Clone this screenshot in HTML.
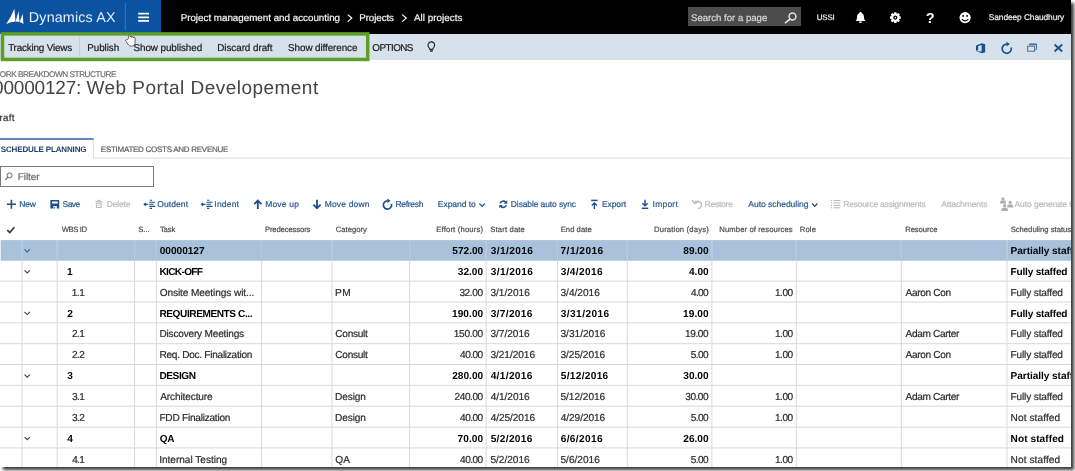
<!DOCTYPE html>
<html lang="en">
<head>
<meta charset="utf-8">
<title>Work breakdown structure - 00000127: Web Portal Developement</title>
<style>
html,body{margin:0;padding:0;background:#fff;}
body{width:1075px;height:471px;overflow:hidden;position:relative;font-family:"Liberation Sans",Arial,sans-serif;text-rendering:geometricPrecision;}
#app{position:absolute;left:0;top:0;width:1071px;height:467px;overflow:hidden;background:#fff;}
#topbar{position:absolute;left:0;top:0;width:1071px;height:33.5px;background:#000;}
#brand{position:absolute;left:0;top:0;width:160.6px;height:33.5px;background:#0b53a0;}
#search{position:absolute;left:687.8px;top:6.8px;width:113.2px;height:19.7px;background:#4c4c4c;}
#actionbar{position:absolute;left:0;top:33.5px;width:1071px;height:26.5px;background:#d7e1ec;}
#filter{position:absolute;left:0;top:166.4px;width:152.4px;height:18.6px;border:1px solid #7a7a7a;background:#fff;}
#texts{position:absolute;left:0;top:0;width:1071px;height:467px;will-change:transform;}
.t{position:absolute;height:24px;line-height:24px;white-space:pre;-webkit-text-stroke:0.2px;}
.b{font-weight:700;-webkit-text-stroke:0;}
.l{-webkit-text-stroke:0;}
svg{position:absolute;left:0;top:0;overflow:visible;}
#shadow{position:absolute;left:0;top:0;width:1071px;height:467px;background:#fff;box-shadow:3px 3px 3px 0 rgba(0,0,0,.77);}
</style>
</head>
<body>
<div id="shadow"></div>
<div id="app">
<div id="topbar"><div id="brand"></div><div id="search"></div></div>
<div id="actionbar"></div>
<div id="filter"></div>
<svg id="gfx" width="1071" height="467" viewBox="0 0 1071 467">
<path d="M0 139.1H93.6" stroke="#2f629e" stroke-width="1.5" fill="none"/>
<path d="M93.4 140V158.2H1071" stroke="#dcdcdc" stroke-width="1" fill="none"/>
<rect x="0.7" y="240.1" width="1071" height="20.6" fill="#a9c1da"/>
<path d="M22 240.2V467" stroke="#d9d9d9" stroke-width="1"/>
<path d="M22 240.2V260.4" stroke="#b3c8de" stroke-width="1.1"/>
<path d="M57.2 240.2V467" stroke="#d9d9d9" stroke-width="1"/>
<path d="M57.2 240.2V260.4" stroke="#b3c8de" stroke-width="1.1"/>
<path d="M134.6 240.2V467" stroke="#d9d9d9" stroke-width="1"/>
<path d="M134.6 240.2V260.4" stroke="#b3c8de" stroke-width="1.1"/>
<path d="M156.4 240.2V467" stroke="#d9d9d9" stroke-width="1"/>
<path d="M156.4 240.2V260.4" stroke="#b3c8de" stroke-width="1.1"/>
<path d="M261.4 240.2V467" stroke="#d9d9d9" stroke-width="1"/>
<path d="M261.4 240.2V260.4" stroke="#b3c8de" stroke-width="1.1"/>
<path d="M331.9 240.2V467" stroke="#d9d9d9" stroke-width="1"/>
<path d="M331.9 240.2V260.4" stroke="#b3c8de" stroke-width="1.1"/>
<path d="M409.6 240.2V467" stroke="#d9d9d9" stroke-width="1"/>
<path d="M409.6 240.2V260.4" stroke="#b3c8de" stroke-width="1.1"/>
<path d="M486.2 240.2V467" stroke="#d9d9d9" stroke-width="1"/>
<path d="M486.2 240.2V260.4" stroke="#b3c8de" stroke-width="1.1"/>
<path d="M557.5 240.2V467" stroke="#d9d9d9" stroke-width="1"/>
<path d="M557.5 240.2V260.4" stroke="#b3c8de" stroke-width="1.1"/>
<path d="M627.3 240.2V467" stroke="#d9d9d9" stroke-width="1"/>
<path d="M627.3 240.2V260.4" stroke="#b3c8de" stroke-width="1.1"/>
<path d="M711.9 240.2V467" stroke="#d9d9d9" stroke-width="1"/>
<path d="M711.9 240.2V260.4" stroke="#b3c8de" stroke-width="1.1"/>
<path d="M796.3 240.2V467" stroke="#d9d9d9" stroke-width="1"/>
<path d="M796.3 240.2V260.4" stroke="#b3c8de" stroke-width="1.1"/>
<path d="M901.3 240.2V467" stroke="#d9d9d9" stroke-width="1"/>
<path d="M901.3 240.2V260.4" stroke="#b3c8de" stroke-width="1.1"/>
<path d="M1007 240.2V467" stroke="#d9d9d9" stroke-width="1"/>
<path d="M1007 240.2V260.4" stroke="#b3c8de" stroke-width="1.1"/>
<path d="M0 281.1H1071" stroke="#d9d9d9" stroke-width="1"/>
<path d="M0 302H1071" stroke="#d9d9d9" stroke-width="1"/>
<path d="M0 322.8H1071" stroke="#d9d9d9" stroke-width="1"/>
<path d="M0 343.7H1071" stroke="#d9d9d9" stroke-width="1"/>
<path d="M0 364.5H1071" stroke="#d9d9d9" stroke-width="1"/>
<path d="M0 385.4H1071" stroke="#d9d9d9" stroke-width="1"/>
<path d="M0 406.2H1071" stroke="#d9d9d9" stroke-width="1"/>
<path d="M0 427.1H1071" stroke="#d9d9d9" stroke-width="1"/>
<path d="M0 447.9H1071" stroke="#d9d9d9" stroke-width="1"/>
<g transform="translate(125.2 32.5)"><path d="M3.2 6.2V1.4c0-1.2 1.7-1.2 1.7 0V4.6c0-1 1.7-1 1.7 0V4.9c0-1 1.7-1 1.7 0V5.4c0-.9 1.6-.9 1.6 0V9.800c0 2.200-1.400 3.800-3.300 3.800H5.800c-1.400 0-2.200-.7-3-1.900L.6 8.400c-.6-.9.600-1.800 1.400-.9z" fill="#fff" stroke="#3a3a3a" stroke-width="0.75"/></g>
<rect x="2.5" y="33.9" width="365.2" height="25.55" fill="none" stroke="#5c9e27" stroke-width="3.5"/>
<path d="M79.5 36.5V56.5" stroke="#c2cedc" stroke-width="1"/>
<g fill="#fff"><path d="M6.2 23.9Q11 17.200 14.4 8.7L15.5 21.5Q10.5 21.7 6.2 23.9Z"/><path d="M15.55 21.5L18.600 11.2L19.55 22Q17.5 21.600 15.55 21.5Z"/><path d="M19.6 22.05L22.700 13.700L23.4 24.1Q21.5 22.7 19.6 22.05Z"/></g>
<path d="M125.3 3V30" stroke="#3f78bb" stroke-width="1"/>
<path d="M138.2 13.7H149M138.2 17.3H149M138.2 20.9H149" stroke="#fff" stroke-width="1.7"/>
<path d="M347.8 14.6L351.8 18.1L347.8 21.6" stroke="#fff" stroke-width="1.2" fill="none"/>
<path d="M402.2 14.6L406.2 18.1L402.2 21.6" stroke="#fff" stroke-width="1.2" fill="none"/>
<g stroke="#e0e0e0" fill="none" stroke-linecap="round"><circle cx="792.5" cy="16.5" r="3.4" stroke-width="1.5"/><path d="M790 19.1L785.6 22.6" stroke-width="1.8"/></g>
<path fill="#fff" d="M860.5 12.1c-.7 0-1.2.5-1.2 1.1c-1.6.6-2.3 2-2.3 3.7c0 2-.4 2.8-1.2 3.6v.6h9.4v-.6c-.8-.8-1.2-1.6-1.2-3.6c0-1.7-.7-3.1-2.3-3.7c0-.6-.5-1.1-1.2-1.1zM859 21.6a1.5 1.5 0 0 0 3 0z"/>
<path fill="#fff" fill-rule="evenodd" d="M900.69 16.51L900.69 18.69L899.00 19.12L898.99 19.14L899.88 20.64L898.34 22.18L896.84 21.29L896.82 21.30L896.39 22.99L894.21 22.99L893.78 21.30L893.76 21.29L892.26 22.18L890.72 20.64L891.61 19.14L891.60 19.12L889.91 18.69L889.91 16.51L891.60 16.08L891.61 16.06L890.72 14.56L892.26 13.02L893.76 13.91L893.78 13.90L894.21 12.21L896.39 12.21L896.82 13.90L896.84 13.91L898.34 13.02L899.88 14.56L898.99 16.06L899.00 16.08Z M897.4 17.6a2.1 2.1 0 1 0 -4.2 0a2.1 2.1 0 1 0 4.2 0Z"/>
<circle cx="895.3" cy="17.6" r="0.8" fill="#fff"/>
<g><circle cx="965.1" cy="17.6" r="5.6" fill="#fff"/><circle cx="963.1" cy="15.9" r="0.95" fill="#000"/><circle cx="967.1" cy="15.9" r="0.95" fill="#000"/><path d="M961.9 19.2Q965.1 22.6 968.3 19.2" stroke="#000" stroke-width="1.1" fill="none"/></g>
<g stroke="#222" fill="none"><path d="M429.9 49.4C429.6 47.8 428 47.3 428 45.2a3.3 3.3 0 0 1 6.6 0c0 2.1-1.6 2.6-1.9 4.2Z" stroke-width="1.1"/><path d="M429.9 51H432.8" stroke-width="1.4"/></g>
<path fill="#1c4f8c" fill-rule="evenodd" d="M976 45.6L981.8 43.3L985.2 44.3V52.2L981.8 53.2L976 51V50.9L981.6 51.6V45.1L978.2 45.9V50L976 50.9Z"/>
<path d="M1011.2 47.5A4.6 4.6 0 1 1 1006.7 44.1" stroke="#1c4f8c" fill="none" stroke-width="1.7"/><path fill="#1c4f8c" d="M1006.5 41.8L1009.9 44.1L1006.5 46.4Z"/>
<g stroke="#4b6f9c" fill="none"><path d="M1029.6 45.4V44.2H1036.5V49.4H1035.2" stroke-width="1"/><path d="M1029.4 44.4H1036.6" stroke-width="1.6"/><rect x="1027.6" y="46.2" width="7" height="5" stroke-width="1" fill="#d7e1ec"/></g>
<path d="M1054.6 44.5L1062.2 51.5M1062.2 44.5L1054.6 51.5" stroke="#1c4f8c" stroke-width="1.8"/>
<g stroke="#666" fill="none"><circle cx="9.6" cy="175.4" r="2.5" stroke-width="1"/><path d="M7.8 177.3L5.3 179.8" stroke-width="1.2"/></g>
<path d="M6.8 204.3H16M11.4 199.8V208.8" stroke="#1c4f8c" stroke-width="1.6"/>
<path fill="#1c4f8c" fill-rule="evenodd" d="M50.4 200H59.2V208.6H50.4Z M52 201.6V203.6H57.7V201.6Z M53.4 205.9V208.6H56.8V205.9Z"/><rect x="53.9" y="207.1" width="0.9" height="1.5" fill="#1c4f8c"/>
<g stroke="#b8b8b8" fill="none" stroke-width="1"><path d="M95.3 201.7H102.3M97.6 201.5V200.3H100V201.5"/><rect x="96.4" y="203.2" width="4.8" height="4.3"/><path d="M97.4 205.3H100.2" stroke-width="0.8"/></g>
<path fill="#1c4f8c" d="M143.4 204.3L145.20000000000002 202.4L147.0 204.3L145.20000000000002 206.20000000000002Z"/>
<g stroke="#1c4f8c" fill="none"><path d="M146.6 204.3H148.3" stroke-width="1.1"/><path d="M149.8 200.2H152.0M149.20000000000002 202.2H155.20000000000002M149.20000000000002 204.3H153.6M149.20000000000002 206.4H155.20000000000002M149.8 208.4H152.0" stroke-width="1.1"/></g>
<path fill="#1c4f8c" d="M200.7 204.3L202.5 202.4L204.29999999999998 204.3L202.5 206.20000000000002Z"/>
<g stroke="#1c4f8c" fill="none"><path d="M203.89999999999998 204.3H205.6" stroke-width="1.1"/><path d="M207.1 200.2H209.29999999999998M206.5 202.2H212.5M206.5 204.3H210.89999999999998M206.5 206.4H212.5M207.1 208.4H209.29999999999998" stroke-width="1.1"/></g>
<path d="M257.8 209V200.8M254.2 204.1L257.8 200.5L261.4 204.100" stroke="#1c4f8c" stroke-width="1.85" fill="none"/>
<path d="M317 199.800V208M313.4 204.7L317 208.3L320.6 204.7" stroke="#1c4f8c" stroke-width="1.85" fill="none"/>
<path d="M391.4 203.9A4.100 4.100 0 1 1 387.4 200.900" stroke="#1c4f8c" fill="none" stroke-width="1.7"/><path fill="#1c4f8c" d="M387.3 198.500L390.5 200.800L387.3 203.100Z"/>
<path d="M479.40 203.45L482.10 206.35L484.80 203.45" stroke="#1c4f8c" stroke-width="1.25" fill="none"/>
<path d="M812.00 203.45L814.70 206.35L817.40 203.45" stroke="#1c4f8c" stroke-width="1.25" fill="none"/>
<g stroke="#1c4f8c" fill="none" stroke-width="1.6"><path d="M500.3 203.5A3.1 3.1 0 0 1 505.6 202.2"/><path d="M506.3 205.1A3.1 3.1 0 0 1 501 206.4"/></g><path fill="#1c4f8c" d="M507.3 200.3V203.7H503.9Z M499.3 208.3V204.9H502.7Z"/>
<path d="M591.2 200.4H597.6" stroke="#1c4f8c" stroke-width="1.5" fill="none"/><path d="M594.4 209V203M591.8 205.5L594.4 202.9L597 205.500" stroke="#1c4f8c" stroke-width="1.4" fill="none"/>
<path d="M641.8 208.3H648.2" stroke="#1c4f8c" stroke-width="1.5" fill="none"/><path d="M645 199.700V205.700M642.4 203.2L645 205.800L647.6 203.2" stroke="#1c4f8c" stroke-width="1.4" fill="none"/>
<g stroke="#b8b8b8" fill="none" stroke-width="1.2"><path d="M694.6 203.2A3.600 3.600 0 1 1 698 208.400"/><path d="M692.2 200.300L694.4 203.600L697.8 201.900"/></g>
<g stroke="#b8b8b8" fill="none" stroke-width="1"><path d="M833.4 200.6H840.4M833.4 203H840.4M833.4 205.4H840.4M833.4 207.8H840.4"/><path d="M830.8 200.6H832M830.8 203H832M830.8 205.4H832M830.8 207.8H832"/></g>
<g fill="#adadad"><circle cx="1003" cy="198.800" r="1.6"/><path d="M1000 203.5v-.9a3 2.300 0 0 1 6 0v.9z"/><circle cx="1010.2" cy="202.300" r="1.6"/><path d="M1007.2 207.600v-1a3 2.300 0 0 1 6 0v1z"/><circle cx="1004.600" cy="205.700" r="1.6"/><path d="M1001.400 211v-1.200a3.200 2.400 0 0 1 6.400 0v1.200z"/></g>
<path d="M7.3 230.2L9.8 232.6L14.3 227.2" stroke="#333" stroke-width="1.6" fill="none"/>
<path d="M24.50 249.43L27.20 252.03L29.90 249.43" stroke="#2a5a94" stroke-width="1.1" fill="none"/>
<path d="M24.50 270.28L27.20 272.88L29.90 270.28" stroke="#444" stroke-width="1.1" fill="none"/>
<path d="M24.50 311.98L27.20 314.58L29.90 311.98" stroke="#444" stroke-width="1.1" fill="none"/>
<path d="M24.50 374.53L27.20 377.13L29.90 374.53" stroke="#444" stroke-width="1.1" fill="none"/>
<path d="M24.50 437.07L27.20 439.68L29.90 437.07" stroke="#444" stroke-width="1.1" fill="none"/>
</svg>
<div id="texts">
<div class="header">
<span class="t l" style="left:28.85px;top:6px;font-size:14.3px;color:#e4edf8;letter-spacing:0.160px">Dynamics AX</span>
<span class="t" style="left:180.65px;top:7px;font-size:9.8px;color:#f4f4f4;letter-spacing:-0.005px">Project management and accounting</span>
<span class="t" style="left:359.25px;top:7px;font-size:9.8px;color:#f4f4f4;letter-spacing:-0.093px">Projects</span>
<span class="t" style="left:413.90px;top:7px;font-size:9.8px;color:#f4f4f4;letter-spacing:0.055px">All projects</span>
<span class="t" style="left:691.00px;top:7px;font-size:9.6px;color:#d8d8d8;letter-spacing:0.000px">Search for a page</span>
<span class="t" style="left:816.80px;top:6px;font-size:7.9px;color:#f0f0f0;letter-spacing:-0.183px">USSI</span>
<span class="t b" style="left:925.85px;top:7px;font-size:14.5px;color:#fff;letter-spacing:0.000px">?</span>
<span class="t" style="left:988.80px;top:5px;font-size:8.3px;color:#f0f0f0;letter-spacing:-0.050px">Sandeep Chaudhury</span>
</div>
<div class="actionbar">
<span class="t" style="left:8.15px;top:37px;font-size:9.9px;color:#1a1a1a;letter-spacing:-0.188px">Tracking Views</span>
<span class="t" style="left:87.25px;top:37px;font-size:9.9px;color:#1a1a1a;letter-spacing:-0.067px">Publish</span>
<span class="t" style="left:133.50px;top:37px;font-size:9.9px;color:#1a1a1a;letter-spacing:-0.081px">Show published</span>
<span class="t" style="left:217.25px;top:37px;font-size:9.9px;color:#1a1a1a;letter-spacing:-0.062px">Discard draft</span>
<span class="t" style="left:288.10px;top:37px;font-size:9.9px;color:#1a1a1a;letter-spacing:-0.096px">Show difference</span>
<span class="t" style="left:372.30px;top:37px;font-size:9.9px;color:#1a1a1a;letter-spacing:-0.550px">OPTIONS</span>
</div>
<div class="pagetitle">
<span class="t" style="left:-7.50px;top:63px;font-size:8.2px;color:#707070;letter-spacing:-0.443px">WORK BREAKDOWN STRUCTURE</span>
<span class="t l" style="left:-6.95px;top:77px;font-size:19.0px;color:#444;letter-spacing:-0.188px">00000127:</span>
<span class="t l" style="left:86.50px;top:77px;font-size:19.0px;color:#444;letter-spacing:0.466px">Web Portal Developement</span>
<span class="t" style="left:-7.75px;top:107px;font-size:9.8px;color:#333;letter-spacing:0.250px">Draft</span>
</div>
<div class="tabs">
<span class="t b" style="left:0.75px;top:138px;font-size:8.0px;color:#1f3f6e;letter-spacing:-0.141px">SCHEDULE PLANNING</span>
<span class="t" style="left:100.85px;top:138px;font-size:8.0px;color:#606060;letter-spacing:-0.273px">ESTIMATED COSTS AND REVENUE</span>
<span class="t" style="left:17.85px;top:166px;font-size:9.8px;color:#666;letter-spacing:-0.020px">Filter</span>
</div>
<div class="toolbar">
<span class="t" style="left:19.25px;top:192px;font-size:8.5px;color:#27578f;letter-spacing:-0.125px">New</span>
<span class="t" style="left:62.60px;top:192px;font-size:8.5px;color:#27578f;letter-spacing:-0.600px">Save</span>
<span class="t" style="left:106.65px;top:192px;font-size:8.5px;color:#b9b9b9;letter-spacing:-0.140px">Delete</span>
<span class="t" style="left:157.30px;top:192px;font-size:8.5px;color:#27578f;letter-spacing:0.075px">Outdent</span>
<span class="t" style="left:214.35px;top:192px;font-size:8.5px;color:#27578f;letter-spacing:0.190px">Indent</span>
<span class="t" style="left:265.15px;top:192px;font-size:8.5px;color:#27578f;letter-spacing:0.200px">Move up</span>
<span class="t" style="left:324.65px;top:192px;font-size:8.5px;color:#27578f;letter-spacing:0.169px">Move down</span>
<span class="t" style="left:395.55px;top:192px;font-size:8.5px;color:#27578f;letter-spacing:-0.317px">Refresh</span>
<span class="t" style="left:437.85px;top:192px;font-size:8.5px;color:#27578f;letter-spacing:-0.056px">Expand to</span>
<span class="t" style="left:510.85px;top:192px;font-size:8.5px;color:#27578f;letter-spacing:-0.119px">Disable auto sync</span>
<span class="t" style="left:602.05px;top:192px;font-size:8.5px;color:#27578f;letter-spacing:-0.110px">Export</span>
<span class="t" style="left:652.55px;top:192px;font-size:8.5px;color:#27578f;letter-spacing:0.230px">Import</span>
<span class="t" style="left:704.55px;top:192px;font-size:8.5px;color:#b9b9b9;letter-spacing:-0.242px">Restore</span>
<span class="t" style="left:748.30px;top:192px;font-size:8.5px;color:#27578f;letter-spacing:-0.021px">Auto scheduling</span>
<span class="t" style="left:843.25px;top:192px;font-size:8.5px;color:#b9b9b9;letter-spacing:-0.211px">Resource assignments</span>
<span class="t" style="left:941.20px;top:192px;font-size:8.5px;color:#b9b9b9;letter-spacing:-0.100px">Attachments</span>
<span class="t" style="left:1014.50px;top:192px;font-size:8.5px;color:#b9b9b9;letter-spacing:-0.070px">Auto generate team</span>
</div>
<div class="gridheader">
<span class="t" style="left:61.70px;top:218px;font-size:7.7px;color:#4c4c4c;letter-spacing:-0.380px">WBS ID</span>
<span class="t" style="left:138.25px;top:218px;font-size:7.7px;color:#4c4c4c;letter-spacing:-0.033px">S...</span>
<span class="t" style="left:159.95px;top:218px;font-size:7.7px;color:#4c4c4c;letter-spacing:-0.167px">Task</span>
<span class="t" style="left:264.90px;top:218px;font-size:7.7px;color:#4c4c4c;letter-spacing:-0.132px">Predecessors</span>
<span class="t" style="left:335.75px;top:218px;font-size:7.7px;color:#4c4c4c;letter-spacing:0.000px">Category</span>
<span class="t" style="left:436.20px;top:218px;font-size:7.7px;color:#4c4c4c;letter-spacing:0.165px">Effort (hours)</span>
<span class="t" style="left:490.35px;top:218px;font-size:7.7px;color:#4c4c4c;letter-spacing:0.128px">Start date</span>
<span class="t" style="left:560.70px;top:218px;font-size:7.7px;color:#4c4c4c;letter-spacing:0.029px">End date</span>
<span class="t" style="left:654.00px;top:218px;font-size:7.7px;color:#4c4c4c;letter-spacing:0.154px">Duration (days)</span>
<span class="t" style="left:719.30px;top:218px;font-size:7.7px;color:#4c4c4c;letter-spacing:0.089px">Number of resources</span>
<span class="t" style="left:799.80px;top:218px;font-size:7.7px;color:#4c4c4c;letter-spacing:0.100px">Role</span>
<span class="t" style="left:905.20px;top:218px;font-size:7.7px;color:#4c4c4c;letter-spacing:-0.086px">Resource</span>
<span class="t" style="left:1010.65px;top:218px;font-size:7.7px;color:#4c4c4c;letter-spacing:-0.011px">Scheduling status</span>
</div>
<div class="row">
<span class="t b" style="left:159.70px;top:240px;font-size:10.1px;color:#000;letter-spacing:0.000px">00000127</span>
<span class="t b" style="left:452.35px;top:240px;font-size:10.1px;color:#000;letter-spacing:-0.010px">572.00</span>
<span class="t b" style="left:490.65px;top:240px;font-size:10.1px;color:#000;letter-spacing:0.436px">3/1/2016</span>
<span class="t b" style="left:560.50px;top:240px;font-size:10.1px;color:#000;letter-spacing:0.486px">7/1/2016</span>
<span class="t b" style="left:683.35px;top:240px;font-size:10.1px;color:#000;letter-spacing:-0.012px">89.00</span>
<span class="t b" style="left:1010.55px;top:240px;font-size:10.1px;color:#000;letter-spacing:-0.060px">Partially staffed</span>
</div>
<div class="row">
<span class="t b" style="left:67.10px;top:261px;font-size:10.1px;color:#000;letter-spacing:0.192px">1</span>
<span class="t b" style="left:159.45px;top:261px;font-size:10.1px;color:#000;letter-spacing:-0.664px">KICK-OFF</span>
<span class="t b" style="left:457.75px;top:261px;font-size:10.1px;color:#000;letter-spacing:0.013px">32.00</span>
<span class="t b" style="left:490.65px;top:261px;font-size:10.1px;color:#000;letter-spacing:0.436px">3/1/2016</span>
<span class="t b" style="left:560.75px;top:261px;font-size:10.1px;color:#000;letter-spacing:0.350px">3/4/2016</span>
<span class="t b" style="left:688.95px;top:261px;font-size:10.1px;color:#000;letter-spacing:0.033px">4.00</span>
<span class="t b" style="left:1010.55px;top:261px;font-size:10.1px;color:#000;letter-spacing:-0.208px">Fully staffed</span>
</div>
<div class="row">
<span class="t" style="left:71.65px;top:282px;font-size:10.1px;color:#2b2b2b;letter-spacing:-0.430px">1.1</span>
<span class="t" style="left:159.70px;top:282px;font-size:10.1px;color:#2b2b2b;letter-spacing:-0.093px">Onsite Meetings wit...</span>
<span class="t" style="left:335.05px;top:282px;font-size:10.1px;color:#2b2b2b;letter-spacing:0.350px">PM</span>
<span class="t" style="left:459.40px;top:282px;font-size:10.1px;color:#2b2b2b;letter-spacing:-0.400px">32.00</span>
<span class="t" style="left:490.40px;top:282px;font-size:10.1px;color:#2b2b2b;letter-spacing:0.014px">3/1/2016</span>
<span class="t" style="left:560.50px;top:282px;font-size:10.1px;color:#2b2b2b;letter-spacing:-0.003px">3/4/2016</span>
<span class="t" style="left:690.88px;top:282px;font-size:10.1px;color:#2b2b2b;letter-spacing:-0.610px">4.00</span>
<span class="t" style="left:774.88px;top:282px;font-size:10.1px;color:#2b2b2b;letter-spacing:-0.443px">1.00</span>
<span class="t" style="left:905.60px;top:282px;font-size:10.1px;color:#2b2b2b;letter-spacing:-0.331px">Aaron Con</span>
<span class="t" style="left:1010.55px;top:282px;font-size:10.1px;color:#2b2b2b;letter-spacing:-0.150px">Fully staffed</span>
</div>
<div class="row">
<span class="t b" style="left:67.35px;top:303px;font-size:10.1px;color:#000;letter-spacing:0.192px">2</span>
<span class="t b" style="left:159.45px;top:303px;font-size:10.1px;color:#000;letter-spacing:-0.425px">REQUIREMENTS C...</span>
<span class="t b" style="left:452.00px;top:303px;font-size:10.1px;color:#000;letter-spacing:0.060px">190.00</span>
<span class="t b" style="left:490.65px;top:303px;font-size:10.1px;color:#000;letter-spacing:0.350px">3/7/2016</span>
<span class="t b" style="left:560.75px;top:303px;font-size:10.1px;color:#000;letter-spacing:0.444px">3/31/2016</span>
<span class="t b" style="left:683.10px;top:303px;font-size:10.1px;color:#000;letter-spacing:0.050px">19.00</span>
<span class="t b" style="left:1010.55px;top:303px;font-size:10.1px;color:#000;letter-spacing:-0.208px">Fully staffed</span>
</div>
<div class="row">
<span class="t" style="left:71.90px;top:323px;font-size:10.1px;color:#2b2b2b;letter-spacing:-0.555px">2.1</span>
<span class="t" style="left:159.45px;top:323px;font-size:10.1px;color:#2b2b2b;letter-spacing:-0.200px">Discovery Meetings</span>
<span class="t" style="left:335.30px;top:323px;font-size:10.1px;color:#2b2b2b;letter-spacing:-0.275px">Consult</span>
<span class="t" style="left:453.75px;top:323px;font-size:10.1px;color:#2b2b2b;letter-spacing:-0.290px">150.00</span>
<span class="t" style="left:490.40px;top:323px;font-size:10.1px;color:#2b2b2b;letter-spacing:-0.003px">3/7/2016</span>
<span class="t" style="left:560.50px;top:323px;font-size:10.1px;color:#2b2b2b;letter-spacing:0.000px">3/31/2016</span>
<span class="t" style="left:685.10px;top:323px;font-size:10.1px;color:#2b2b2b;letter-spacing:-0.450px">19.00</span>
<span class="t" style="left:774.88px;top:323px;font-size:10.1px;color:#2b2b2b;letter-spacing:-0.443px">1.00</span>
<span class="t" style="left:905.60px;top:323px;font-size:10.1px;color:#2b2b2b;letter-spacing:-0.355px">Adam Carter</span>
<span class="t" style="left:1010.55px;top:323px;font-size:10.1px;color:#2b2b2b;letter-spacing:-0.150px">Fully staffed</span>
</div>
<div class="row">
<span class="t" style="left:71.90px;top:344px;font-size:10.1px;color:#2b2b2b;letter-spacing:-0.555px">2.2</span>
<span class="t" style="left:159.45px;top:344px;font-size:10.1px;color:#2b2b2b;letter-spacing:-0.276px">Req. Doc. Finalization</span>
<span class="t" style="left:335.30px;top:344px;font-size:10.1px;color:#2b2b2b;letter-spacing:-0.275px">Consult</span>
<span class="t" style="left:460.10px;top:344px;font-size:10.1px;color:#2b2b2b;letter-spacing:-0.575px">40.00</span>
<span class="t" style="left:490.40px;top:344px;font-size:10.1px;color:#2b2b2b;letter-spacing:-0.030px">3/21/2016</span>
<span class="t" style="left:560.50px;top:344px;font-size:10.1px;color:#2b2b2b;letter-spacing:-0.030px">3/25/2016</span>
<span class="t" style="left:690.63px;top:344px;font-size:10.1px;color:#2b2b2b;letter-spacing:-0.527px">5.00</span>
<span class="t" style="left:774.88px;top:344px;font-size:10.1px;color:#2b2b2b;letter-spacing:-0.443px">1.00</span>
<span class="t" style="left:905.60px;top:344px;font-size:10.1px;color:#2b2b2b;letter-spacing:-0.331px">Aaron Con</span>
<span class="t" style="left:1010.55px;top:344px;font-size:10.1px;color:#2b2b2b;letter-spacing:-0.150px">Fully staffed</span>
</div>
<div class="row">
<span class="t b" style="left:67.35px;top:365px;font-size:10.1px;color:#000;letter-spacing:0.192px">3</span>
<span class="t b" style="left:159.45px;top:365px;font-size:10.1px;color:#000;letter-spacing:-0.430px">DESIGN</span>
<span class="t b" style="left:452.25px;top:365px;font-size:10.1px;color:#000;letter-spacing:0.010px">280.00</span>
<span class="t b" style="left:490.65px;top:365px;font-size:10.1px;color:#000;letter-spacing:0.350px">4/1/2016</span>
<span class="t b" style="left:560.75px;top:365px;font-size:10.1px;color:#000;letter-spacing:0.319px">5/12/2016</span>
<span class="t b" style="left:683.35px;top:365px;font-size:10.1px;color:#000;letter-spacing:-0.012px">30.00</span>
<span class="t b" style="left:1010.55px;top:365px;font-size:10.1px;color:#000;letter-spacing:-0.060px">Partially staffed</span>
</div>
<div class="row">
<span class="t" style="left:71.90px;top:386px;font-size:10.1px;color:#2b2b2b;letter-spacing:-0.555px">3.1</span>
<span class="t" style="left:160.20px;top:386px;font-size:10.1px;color:#2b2b2b;letter-spacing:-0.127px">Architecture</span>
<span class="t" style="left:335.05px;top:386px;font-size:10.1px;color:#2b2b2b;letter-spacing:-0.120px">Design</span>
<span class="t" style="left:454.57px;top:386px;font-size:10.1px;color:#2b2b2b;letter-spacing:-0.454px">240.00</span>
<span class="t" style="left:490.65px;top:386px;font-size:10.1px;color:#2b2b2b;letter-spacing:-0.039px">4/1/2016</span>
<span class="t" style="left:560.50px;top:386px;font-size:10.1px;color:#2b2b2b;letter-spacing:-0.030px">5/12/2016</span>
<span class="t" style="left:685.35px;top:386px;font-size:10.1px;color:#2b2b2b;letter-spacing:-0.512px">30.00</span>
<span class="t" style="left:774.88px;top:386px;font-size:10.1px;color:#2b2b2b;letter-spacing:-0.443px">1.00</span>
<span class="t" style="left:905.60px;top:386px;font-size:10.1px;color:#2b2b2b;letter-spacing:-0.355px">Adam Carter</span>
<span class="t" style="left:1010.55px;top:386px;font-size:10.1px;color:#2b2b2b;letter-spacing:-0.150px">Fully staffed</span>
</div>
<div class="row">
<span class="t" style="left:71.90px;top:407px;font-size:10.1px;color:#2b2b2b;letter-spacing:-0.555px">3.2</span>
<span class="t" style="left:159.45px;top:407px;font-size:10.1px;color:#2b2b2b;letter-spacing:-0.243px">FDD Finalization</span>
<span class="t" style="left:335.05px;top:407px;font-size:10.1px;color:#2b2b2b;letter-spacing:-0.120px">Design</span>
<span class="t" style="left:460.10px;top:407px;font-size:10.1px;color:#2b2b2b;letter-spacing:-0.575px">40.00</span>
<span class="t" style="left:490.65px;top:407px;font-size:10.1px;color:#2b2b2b;letter-spacing:-0.061px">4/25/2016</span>
<span class="t" style="left:560.75px;top:407px;font-size:10.1px;color:#2b2b2b;letter-spacing:-0.061px">4/29/2016</span>
<span class="t" style="left:690.63px;top:407px;font-size:10.1px;color:#2b2b2b;letter-spacing:-0.527px">5.00</span>
<span class="t" style="left:774.88px;top:407px;font-size:10.1px;color:#2b2b2b;letter-spacing:-0.443px">1.00</span>
<span class="t" style="left:1010.55px;top:407px;font-size:10.1px;color:#2b2b2b;letter-spacing:0.095px">Not staffed</span>
</div>
<div class="row">
<span class="t b" style="left:67.35px;top:428px;font-size:10.1px;color:#000;letter-spacing:0.192px">4</span>
<span class="t b" style="left:159.70px;top:428px;font-size:10.1px;color:#000;letter-spacing:-0.200px">QA</span>
<span class="t b" style="left:457.60px;top:428px;font-size:10.1px;color:#000;letter-spacing:0.050px">70.00</span>
<span class="t b" style="left:490.65px;top:428px;font-size:10.1px;color:#000;letter-spacing:0.350px">5/2/2016</span>
<span class="t b" style="left:560.75px;top:428px;font-size:10.1px;color:#000;letter-spacing:0.350px">6/6/2016</span>
<span class="t b" style="left:683.35px;top:428px;font-size:10.1px;color:#000;letter-spacing:-0.012px">26.00</span>
<span class="t b" style="left:1010.55px;top:428px;font-size:10.1px;color:#000;letter-spacing:0.075px">Not staffed</span>
</div>
<div class="row">
<span class="t" style="left:72.15px;top:449px;font-size:10.1px;color:#2b2b2b;letter-spacing:-0.680px">4.1</span>
<span class="t" style="left:159.20px;top:449px;font-size:10.1px;color:#2b2b2b;letter-spacing:-0.023px">Internal Testing</span>
<span class="t" style="left:335.30px;top:449px;font-size:10.1px;color:#2b2b2b;letter-spacing:0.100px">QA</span>
<span class="t" style="left:460.10px;top:449px;font-size:10.1px;color:#2b2b2b;letter-spacing:-0.575px">40.00</span>
<span class="t" style="left:490.40px;top:449px;font-size:10.1px;color:#2b2b2b;letter-spacing:-0.003px">5/2/2016</span>
<span class="t" style="left:560.50px;top:449px;font-size:10.1px;color:#2b2b2b;letter-spacing:-0.003px">5/6/2016</span>
<span class="t" style="left:690.63px;top:449px;font-size:10.1px;color:#2b2b2b;letter-spacing:-0.527px">5.00</span>
<span class="t" style="left:774.88px;top:449px;font-size:10.1px;color:#2b2b2b;letter-spacing:-0.443px">1.00</span>
<span class="t" style="left:1010.55px;top:449px;font-size:10.1px;color:#2b2b2b;letter-spacing:0.095px">Not staffed</span>
</div>
</div>
</div>
</body>
</html>
